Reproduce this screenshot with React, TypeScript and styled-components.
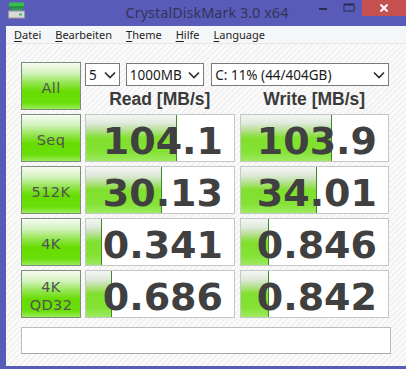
import React from "react";
import styled, { createGlobalStyle } from "styled-components";

const GlobalStyle = createGlobalStyle`
  html, body { margin: 0; padding: 0; }
  body { width: 406px; height: 369px; overflow: hidden; background: #585cb8; }
`;

const Window = styled.div`
  width: 406px;
  height: 369px;
  background: #585cb8;
  display: flex;
  flex-direction: column;
  box-sizing: border-box;
  padding-bottom: 3px;
`;

const TitleBar = styled.div`
  height: 26px;
  display: grid;
  grid-template-columns: 1fr auto 1fr;
  align-items: start;
`;

const AppIcon = styled.div`
  padding: 2px 0 0 8px;
  height: 17px;
`;

const Title = styled.div`
  font-family: "Noto Sans", sans-serif;
  font-size: 14.5px;
  line-height: 24px;
  color: #34345a;
  padding-left: 8px;
  white-space: nowrap;
`;

const Controls = styled.div`
  display: flex;
  justify-content: flex-end;
  align-items: flex-start;
`;

const CtrlButton = styled.div<{ $close?: boolean }>`
  width: ${(p) => (p.$close ? "44px" : "26px")};
  height: 16px;
  display: flex;
  align-items: center;
  justify-content: center;
  background: ${(p) => (p.$close ? "#c75050" : "transparent")};
`;

const Body = styled.div`
  flex: 1;
  margin-left: 6px;
  display: flex;
  flex-direction: column;
  background: #fff;
`;

const MenuBar = styled.div`
  height: 17px;
  display: flex;
  align-items: center;
  padding-left: 1px;
  background: #f5f6f7;
  border-bottom: 1px solid #e6e6e6;
`;

const MenuItem = styled.span`
  font-family: "Noto Sans", sans-serif;
  font-size: 11px;
  color: #1e1e1e;
  padding: 0 7px;
  u { text-decoration: underline; text-underline-offset: 2px; }
`;

const Client = styled.div`
  flex: 1;
  padding: 18px 0 0 15px;
  background-color: #f2f2f2;
  background-image: repeating-linear-gradient(
    135deg,
    #f2f2f2 0px,
    #f2f2f2 2px,
    #fbfbfb 2px,
    #fbfbfb 4px
  );
`;

const Grid = styled.div`
  display: grid;
  grid-template-columns: 60px 150px 150px;
  grid-auto-rows: 48px;
  column-gap: 4px;
  row-gap: 4px;
`;

const TestButton = styled.div`
  box-sizing: border-box;
  border: 1px solid #7b8d7b;
  background: linear-gradient(
    #f6fbf2 0%,
    #d2f2bc 22%,
    #8ee448 45%,
    #66dc00 62%,
    #6ade0a 86%,
    #9aec58 100%
  );
  display: flex;
  flex-direction: column;
  align-items: center;
  justify-content: center;
  font-family: "DejaVu Sans", sans-serif;
  font-size: 14.5px;
  line-height: 18px;
  letter-spacing: 0.4px;
  color: #525252;
  padding-top: 3px;
`;

const TopCell = styled.div`
  grid-column: 2 / span 2;
  display: flex;
  flex-direction: column;
`;

const SelectRow = styled.div`
  display: flex;
  margin-top: 1px;
  height: 23px;
`;

const Select = styled.div<{ $w: number; $gap?: number }>`
  box-sizing: border-box;
  width: ${(p) => p.$w}px;
  margin-left: ${(p) => p.$gap ?? 0}px;
  height: 23px;
  border: 1px solid #7a7a7a;
  background: #fff;
  display: flex;
  align-items: center;
  justify-content: space-between;
  padding: 0 3px 0 3px;
  font-family: "Noto Sans", sans-serif;
  font-size: 13.5px;
  color: #1a1a1a;
`;

const HeaderRow = styled.div`
  display: flex;
  gap: 5px;
  height: 24px;
`;

const Header = styled.div`
  width: 150px;
  text-align: center;
  font-family: "Liberation Sans", Arial, sans-serif;
  font-weight: bold;
  font-size: 17.5px;
  line-height: 26px;
  color: #3a3a3a;
`;

const ResultBox = styled.div<{ $shift?: number }>`
  position: relative;
  box-sizing: border-box;
  margin-left: ${(p) => p.$shift ?? 0}px;
  border: 1px solid #c6c6c6;
  background: #fff;
`;

const Bar = styled.div`
  position: absolute;
  left: 0;
  top: 0;
  bottom: 0;
  border-right: 1px solid #3e8a2a;
  background: linear-gradient(
    #f4f6f4 0%,
    #dfe9dc 18%,
    #b4e08e 34%,
    #80e02c 50%,
    #84e234 80%,
    #9eea62 100%
  );
`;

const Value = styled.div`
  position: relative;
  text-align: right;
  padding: 6px 11px 0 0;
  font-family: "DejaVu Sans", Verdana, sans-serif;
  font-weight: bold;
  font-size: 38px;
  line-height: 40px;
  color: #404040;
`;

const StatusBox = styled.div`
  box-sizing: border-box;
  margin-top: 9px;
  width: 370px;
  height: 27px;
  background: #fff;
  border: 1px solid #bcbcbc;
  border-bottom-color: #a8a8a8;
`;

const Chevron = () => (
  <svg width="12" height="8" viewBox="0 0 12 8">
    <path d="M1 1.5 L6 6.5 L11 1.5" fill="none" stroke="#2b2b2b" strokeWidth="1.6" />
  </svg>
);

const DriveIcon = () => (
  <svg width="17" height="17" viewBox="0 0 17 17">
    <rect x="1" y="0.5" width="15" height="4" fill="#35c24a" />
    <rect x="1" y="4.5" width="15" height="2" fill="#1f8f32" />
    <rect x="3" y="6.5" width="11" height="1.5" fill="#2aa83e" />
    <rect x="0.5" y="9" width="16" height="7" fill="#d8d8d8" stroke="#9a9a9a" strokeWidth="1" />
    <rect x="11" y="11.5" width="3" height="2" fill="#2fc34a" />
  </svg>
);

const rows = [
  { label: ["Seq"], read: "104.1", write: "103.9", rw: 90, ww: 90 },
  { label: ["512K"], read: "30.13", write: "34.01", rw: 75, ww: 75 },
  { label: ["4K"], read: "0.341", write: "0.846", rw: 15, ww: 27 },
  { label: ["4K", "QD32"], read: "0.686", write: "0.842", rw: 25, ww: 27 },
];

const Result = ({ value, bar, shift }: { value: string; bar: number; shift?: number }) => (
  <ResultBox $shift={shift}>
    <Bar style={{ width: bar }} />
    <Value>{value}</Value>
  </ResultBox>
);

export default function App() {
  return (
    <>
      <GlobalStyle />
      <Window>
        <TitleBar>
          <AppIcon>
            <DriveIcon />
          </AppIcon>
          <Title>CrystalDiskMark 3.0 x64</Title>
          <Controls>
            <CtrlButton>
              <svg width="10" height="10" viewBox="0 0 10 10">
                <rect x="1" y="5" width="8" height="2" fill="#2a2a50" />
              </svg>
            </CtrlButton>
            <CtrlButton>
              <svg width="12" height="10" viewBox="0 0 12 10">
                <rect x="1" y="1" width="10" height="7" fill="none" stroke="#2a2a50" strokeWidth="1" />
                <rect x="1" y="1" width="10" height="1.5" fill="#2a2a50" />
              </svg>
            </CtrlButton>
            <CtrlButton $close>
              <svg width="10" height="10" viewBox="0 0 10 10">
                <path d="M1.5 1.5 L8.5 8.5 M8.5 1.5 L1.5 8.5" stroke="#fff" strokeWidth="2" />
              </svg>
            </CtrlButton>
          </Controls>
        </TitleBar>
        <Body>
          <MenuBar>
            <MenuItem><u>D</u>atei</MenuItem>
            <MenuItem><u>B</u>earbeiten</MenuItem>
            <MenuItem><u>T</u>heme</MenuItem>
            <MenuItem><u>H</u>ilfe</MenuItem>
            <MenuItem><u>L</u>anguage</MenuItem>
          </MenuBar>
          <Client>
            <Grid>
              <TestButton>All</TestButton>
              <TopCell>
                <SelectRow>
                  <Select $w={35}>
                    5<Chevron />
                  </Select>
                  <Select $w={79} $gap={6}>
                    1000MB<Chevron />
                  </Select>
                  <Select $w={179} $gap={7}>
                    C: 11% (44/404GB)<Chevron />
                  </Select>
                </SelectRow>
                <HeaderRow>
                  <Header>Read [MB/s]</Header>
                  <Header>Write [MB/s]</Header>
                </HeaderRow>
              </TopCell>
              {rows.map((r) => (
                <React.Fragment key={r.read}>
                  <TestButton>
                    {r.label.map((l) => (
                      <span key={l}>{l}</span>
                    ))}
                  </TestButton>
                  <Result value={r.read} bar={r.rw} />
                  <Result value={r.write} bar={r.ww} shift={1} />
                </React.Fragment>
              ))}
            </Grid>
            <StatusBox />
          </Client>
        </Body>
      </Window>
    </>
  );
}
